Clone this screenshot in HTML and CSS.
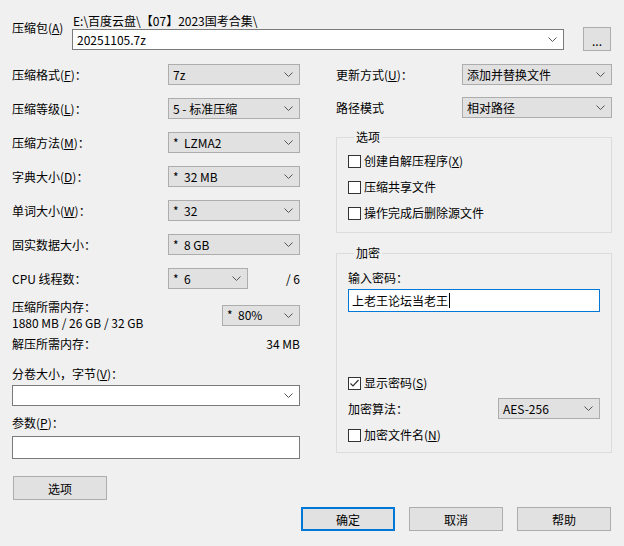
FILE: index.html
```html
<!DOCTYPE html>
<html lang="zh-CN">
<head>
    <meta charset="UTF-8">
    <title>添加到压缩包</title>
    <link rel="stylesheet" href="styles.css">
</head>
<body>
<div class="dialog">

    <div class="archive-row">
        <div class="archive-label">压缩包(<u>A</u>)</div>
        <div class="archive-field">
            <div class="path">E:\百度云盘\【07】2023国考合集\</div>
            <div class="archive-line">
                <div class="combo edit wide">
                    <span>20251105.7z</span>
                    <svg class="chev" width="9" height="5" viewBox="0 0 9 5"><path d="M0.5 0.5 L4.5 4.5 L8.5 0.5" fill="none" stroke="#555" stroke-width="1"/></svg>
                </div>
                <button class="btn browse">...</button>
            </div>
        </div>
    </div>

    <div class="main">
        <!-- left column -->
        <div class="left">
            <div class="row">
                <div class="label">压缩格式(<u>F</u>)：</div>
                <div class="combo"><span>7z</span><svg class="chev" width="9" height="5" viewBox="0 0 9 5"><path d="M0.5 0.5 L4.5 4.5 L8.5 0.5" fill="none" stroke="#555"/></svg></div>
            </div>
            <div class="row">
                <div class="label">压缩等级(<u>L</u>)：</div>
                <div class="combo"><span>5 - 标准压缩</span><svg class="chev" width="9" height="5" viewBox="0 0 9 5"><path d="M0.5 0.5 L4.5 4.5 L8.5 0.5" fill="none" stroke="#555"/></svg></div>
            </div>
            <div class="row">
                <div class="label">压缩方法(<u>M</u>)：</div>
                <div class="combo"><span>*&nbsp; LZMA2</span><svg class="chev" width="9" height="5" viewBox="0 0 9 5"><path d="M0.5 0.5 L4.5 4.5 L8.5 0.5" fill="none" stroke="#555"/></svg></div>
            </div>
            <div class="row">
                <div class="label">字典大小(<u>D</u>)：</div>
                <div class="combo"><span>*&nbsp; 32 MB</span><svg class="chev" width="9" height="5" viewBox="0 0 9 5"><path d="M0.5 0.5 L4.5 4.5 L8.5 0.5" fill="none" stroke="#555"/></svg></div>
            </div>
            <div class="row">
                <div class="label">单词大小(<u>W</u>)：</div>
                <div class="combo"><span>*&nbsp; 32</span><svg class="chev" width="9" height="5" viewBox="0 0 9 5"><path d="M0.5 0.5 L4.5 4.5 L8.5 0.5" fill="none" stroke="#555"/></svg></div>
            </div>
            <div class="row">
                <div class="label">固实数据大小：</div>
                <div class="combo"><span>*&nbsp; 8 GB</span><svg class="chev" width="9" height="5" viewBox="0 0 9 5"><path d="M0.5 0.5 L4.5 4.5 L8.5 0.5" fill="none" stroke="#555"/></svg></div>
            </div>
            <div class="row cpu-row">
                <div class="label">CPU 线程数：</div>
                <div class="combo small"><span>*&nbsp; 6</span><svg class="chev" width="9" height="5" viewBox="0 0 9 5"><path d="M0.5 0.5 L4.5 4.5 L8.5 0.5" fill="none" stroke="#555"/></svg></div>
                <div class="value">/ 6</div>
            </div>

            <div class="row mem-row">
                <div class="label two-line">
                    <div>压缩所需内存：</div>
                    <div>1880 MB / 26 GB / 32 GB</div>
                </div>
                <div class="combo mem"><span>*&nbsp; 80%</span><svg class="chev" width="9" height="5" viewBox="0 0 9 5"><path d="M0.5 0.5 L4.5 4.5 L8.5 0.5" fill="none" stroke="#555"/></svg></div>
            </div>
            <div class="row text-row">
                <div class="label">解压所需内存：</div>
                <div class="value">34 MB</div>
            </div>

            <div class="caption split-caption">分卷大小，字节(<u>V</u>)：</div>
            <div class="combo edit full"><span></span><svg class="chev" width="9" height="5" viewBox="0 0 9 5"><path d="M0.5 0.5 L4.5 4.5 L8.5 0.5" fill="none" stroke="#555"/></svg></div>

            <div class="caption param-caption">参数(<u>P</u>)：</div>
            <div class="textbox"></div>

            <button class="btn options">选项</button>
        </div>

        <!-- right column -->
        <div class="right">
            <div class="row">
                <div class="label">更新方式(<u>U</u>)：</div>
                <div class="combo update"><span>添加并替换文件</span><svg class="chev" width="9" height="5" viewBox="0 0 9 5"><path d="M0.5 0.5 L4.5 4.5 L8.5 0.5" fill="none" stroke="#555"/></svg></div>
            </div>
            <div class="row path-row">
                <div class="label">路径模式</div>
                <div class="combo update"><span>相对路径</span><svg class="chev" width="9" height="5" viewBox="0 0 9 5"><path d="M0.5 0.5 L4.5 4.5 L8.5 0.5" fill="none" stroke="#555"/></svg></div>
            </div>

            <fieldset class="group options-group">
                <legend>选项</legend>
                <div class="check"><span class="box"></span>创建自解压程序(<u>X</u>)</div>
                <div class="check"><span class="box"></span>压缩共享文件</div>
                <div class="check"><span class="box"></span>操作完成后删除源文件</div>
            </fieldset>

            <fieldset class="group crypt-group">
                <legend>加密</legend>
                <div class="caption pwd-caption">输入密码：</div>
                <div class="textbox pwd">上老王论坛当老王<span class="caret"></span></div>
                <div class="check show-pwd">
                    <span class="box">
                        <svg width="11" height="11" viewBox="0 0 11 11"><path d="M1.5 5.5 L4 8 L9.5 2" fill="none" stroke="#333" stroke-width="1.2"/></svg>
                    </span>显示密码(<u>S</u>)
                </div>
                <div class="row algo-row">
                    <div class="label">加密算法：</div>
                    <div class="combo algo"><span>AES-256</span><svg class="chev" width="9" height="5" viewBox="0 0 9 5"><path d="M0.5 0.5 L4.5 4.5 L8.5 0.5" fill="none" stroke="#555"/></svg></div>
                </div>
                <div class="check"><span class="box"></span>加密文件名(<u>N</u>)</div>
            </fieldset>
        </div>
    </div>

    <div class="buttons">
        <button class="btn default">确定</button>
        <button class="btn">取消</button>
        <button class="btn">帮助</button>
    </div>
</div>
</body>
</html>
```

FILE: styles.css
```css
body {
    margin: 0;
    background-color: #f0f0f0;
    font-family: "Noto Sans CJK SC", "Noto Sans", sans-serif;
    font-size: 12px;
    line-height: 16px;
    color: #000;
}

u {
    text-decoration: underline;
    text-underline-offset: 1px;
}

.dialog {
    width: 624px;
    height: 546px;
    padding: 0 12px;
    box-sizing: border-box;
}

/* archive name */
.archive-row {
    display: flex;
}

.archive-label {
    width: 60px;
    margin-top: 20px;
}

.archive-field {
    margin-top: 13px;
}

.path {
    padding-left: 1px;
    height: 16px;
}

.archive-line {
    display: flex;
    align-items: flex-start;
}

/* combo boxes */
.combo {
    display: flex;
    align-items: center;
    justify-content: space-between;
    box-sizing: border-box;
    width: 132px;
    height: 21px;
    padding: 0 6px 0 4px;
    background-color: #e1e1e1;
    border: 1px solid #adadad;
    white-space: nowrap;
}

.combo.edit {
    background-color: #fff;
    border-color: #7a7a7a;
}

.combo.wide {
    width: 492px;
}

.combo.small {
    width: 80px;
}

.combo.mem {
    width: 78px;
}

.combo.full {
    width: 288px;
}

.combo.update {
    width: 150px;
}

.combo.algo {
    width: 102px;
}

.chev {
    flex-shrink: 0;
}

.textbox {
    box-sizing: border-box;
    height: 23px;
    background-color: #fff;
    border: 1px solid #7a7a7a;
}

/* buttons */
.btn {
    box-sizing: border-box;
    width: 94px;
    height: 24px;
    padding: 0;
    font-family: inherit;
    font-size: 12px;
    color: #000;
    background-color: #e1e1e1;
    border: 1px solid #adadad;
}

.btn.browse {
    width: 28px;
    margin-top: -2px;
    margin-left: 19px;
    padding-top: 2px;
}

.btn.default {
    border: 2px solid #0078d7;
}

/* two columns */
.main {
    display: flex;
    justify-content: space-between;
    margin-top: 13px;
}

.left {
    width: 288px;
}

.right {
    width: 276px;
}

.row {
    display: flex;
    align-items: center;
    margin-bottom: 13px;
}

.row .label {
    flex: 1;
}

.value {
    flex: 1;
    text-align: right;
}

.cpu-row {
    margin-bottom: 0;
}

.cpu-row .label {
    flex: none;
    width: 156px;
}

.text-row .label + .value {
    flex: none;
}

.mem-row {
    margin-top: 10px;
    margin-bottom: 0;
}

.two-line div {
    height: 16px;
    line-height: 16px;
}

.text-row {
    margin-top: 5px;
    margin-bottom: 0;
}

.split-caption {
    margin-top: 14px;
}

.combo.full {
    margin-top: 3px;
}

.param-caption {
    margin-top: 9px;
}

.left .textbox {
    margin-top: 5px;
}

.btn.options {
    margin-top: 17px;
    margin-left: 1px;
}

.path-row {
    margin-top: -1px;
    margin-bottom: 0;
}

/* group boxes */
.group {
    margin: 0;
    padding: 0 11px 0 11px;
    border: 1px solid #dcdcdc;
}

.group legend {
    padding: 0 2px;
    margin-left: 6px;
    line-height: 16px;
}

.options-group {
    margin-top: 11px;
    padding-top: 3px;
    padding-bottom: 6px;
}

.crypt-group {
    margin-top: 12px;
    padding-top: 9px;
    padding-bottom: 4px;
}

.check {
    display: flex;
    align-items: center;
    height: 26px;
    white-space: nowrap;
}

.box {
    display: flex;
    align-items: center;
    justify-content: center;
    box-sizing: border-box;
    width: 13px;
    height: 13px;
    margin-right: 3px;
    background-color: #fff;
    border: 1px solid #333;
}

.pwd {
    display: flex;
    align-items: center;
    margin-top: 3px;
    padding-left: 3px;
    border-color: #0078d7;
}

.caret {
    width: 1px;
    height: 15px;
    margin-left: 1px;
    background-color: #000;
}

.show-pwd {
    margin-top: 58px;
}

.algo-row {
    margin-top: 2px;
    margin-bottom: 3px;
}

/* bottom buttons */
.buttons {
    display: flex;
    justify-content: flex-end;
    gap: 14px;
    margin-top: 7px;
    padding-right: 1px;
}
```
